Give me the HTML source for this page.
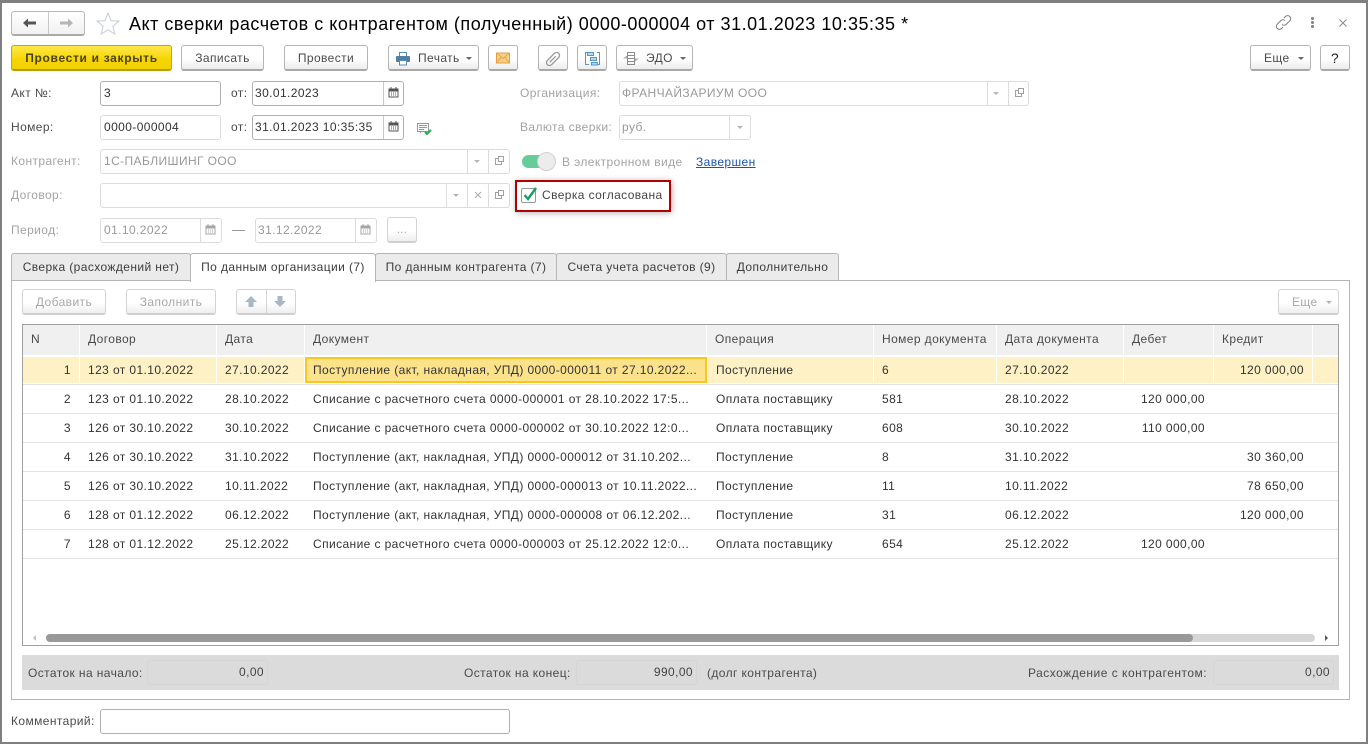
<!DOCTYPE html>
<html lang="ru"><head><meta charset="utf-8"><title>Акт сверки</title>
<style>
html,body{margin:0;padding:0;width:1368px;height:744px;overflow:hidden;background:#fff}
body{font:12px/16px "Liberation Sans",Arial,sans-serif;color:#4a4a4a;position:relative;letter-spacing:.4px}
div,span,svg{position:absolute;box-sizing:border-box}
.t{white-space:nowrap;height:16px;line-height:16px}
.g{color:#a3a3a3}
.d{color:#333}
.r{text-align:right}
.f{border:1px solid #b0b0b0;border-radius:3px;background:#fff;height:25px}
.fd{border:1px solid #dcdcdc;border-radius:3px;background:#fff;height:25px}
.vl{width:1px;top:0;bottom:0;background:#c8c8c8}
.vld{width:1px;top:0;bottom:0;background:#dcdcdc}
.b{height:26px;border:1px solid #b5b5b5;border-bottom:2px solid #a8a8a8;border-radius:3px;background:linear-gradient(#fff,#fff 55%,#ececec);text-align:center;line-height:24px;color:#4a4a4a;white-space:nowrap}
.bd{height:26px;border:1px solid #d4d4d4;border-bottom:2px solid #cfcfcf;border-radius:3px;background:linear-gradient(#fff,#fff 55%,#efefef);text-align:center;line-height:24px;color:#a8a8a8;white-space:nowrap}
.tab{top:253px;height:28px;border:1px solid #b5b5b5;border-radius:3px 3px 0 0;background:#ebebeb;color:#3c3c3c;line-height:26px;text-align:center;white-space:nowrap}
.h{top:325px;height:30px;background:#f0f0f0;line-height:28px;padding-left:8px;color:#4a4a4a;white-space:nowrap}
.c{height:16px;line-height:16px;color:#333;white-space:nowrap}
.sep{left:23px;width:1315px;height:1px;background:#e3e3e3}
.v{top:357px;width:1px;height:26px;background:#fff}
</style></head><body>
<!-- window frame -->
<div style="left:0;top:0;width:1368px;height:744px;border:solid #7f7f7f;border-width:3px 2px 2px 2px"></div>

<!-- nav -->
<div style="left:11px;top:11px;width:74px;height:25px;border:1px solid #b8b8b8;border-bottom:2px solid #aaa;border-radius:3px;background:linear-gradient(#fff,#f1f1f1)"></div>
<div style="left:48px;top:12px;width:1px;height:22px;background:#c8c8c8"></div>
<svg style="left:22px;top:16px" width="16" height="14" viewBox="0 0 16 14"><path d="M1 7l5-4.500V5.500h8v3H6v3z" fill="#555"/></svg>
<svg style="left:58px;top:16px" width="16" height="14" viewBox="0 0 16 14"><path d="M15 7l-5-4.500V5.500H2v3h8v3z" fill="#b5b5b5"/></svg>
<svg style="left:95px;top:11px" width="26" height="24" viewBox="0 0 26 24"><path d="M13 2l3 7.600 8 .6-6.200 5 2 7.800L13 18.800 6.200 23l2-7.800L2 10.200l8-.6z" fill="#fff" stroke="#c9d1d8" stroke-width="1.100"/></svg>
<div class="t" style="left:129px;top:12px;height:24px;line-height:24px;font-size:18px;color:#000;letter-spacing:.52px">Акт сверки расчетов с контрагентом (полученный) 0000-000004 от 31.01.2023 10:35:35 *</div>
<svg style="left:1275px;top:14px" width="17" height="17" viewBox="0 0 17 17" fill="none" stroke="#7a7a7a" stroke-width="1"><path d="M9 4l1.500-1.500a3 3 0 0 1 4.300 4.300L11 10.500a3 3 0 0 1-4 0"/><path d="M8 13l-1.500 1.500a3 3 0 0 1-4.300-4.300L6 6.500a3 3 0 0 1 4 0"/></svg>
<div style="left:1311px;top:17px;width:3px;height:3px;background:#8a8a8a;border-radius:1px"></div>
<div style="left:1311px;top:21px;width:3px;height:3px;background:#8a8a8a;border-radius:1px"></div>
<div style="left:1311px;top:25px;width:3px;height:3px;background:#8a8a8a;border-radius:1px"></div>
<svg style="left:1338px;top:18px" width="10" height="10" viewBox="0 0 10 10"><path d="M1.500 1.500l7 7M8.500 1.500l-7 7" stroke="#8a8a8a" fill="none"/></svg>

<!-- toolbar -->
<div style="left:11px;top:45px;width:161px;height:26px;border:1px solid #c5a800;border-bottom:2px solid #b89c00;border-radius:3px;background:linear-gradient(#ffe84a,#f6d500 60%,#f2d000);text-align:center;line-height:24px;font-weight:bold;color:#4a4320;white-space:nowrap;letter-spacing:.68px">Провести и закрыть</div>
<div class="b" style="left:181px;top:45px;width:83px">Записать</div>
<div class="b" style="left:284px;top:45px;width:84px">Провести</div>
<div class="b" style="left:388px;top:45px;width:91px;text-align:left;padding-left:29px">Печать</div>
<svg style="left:395px;top:51px" width="16" height="15" viewBox="0 0 16 15"><rect x="4.500" y="1.500" width="7" height="4" fill="#fff" stroke="#5d88ad"/><rect x="1" y="5" width="14" height="6" rx="1" fill="#4f7ea6"/><rect x="4.500" y="9.500" width="7" height="4.500" fill="#fff" stroke="#5d88ad"/></svg>
<svg style="left:465px;top:56px" width="8" height="5" viewBox="0 0 8 5"><path d="M1 1h6L4 4z" fill="#666"/></svg>
<div class="b" style="left:488px;top:45px;width:30px"></div>
<svg style="left:495px;top:52px" width="16" height="12" viewBox="0 0 16 12"><rect x="1.500" y="1" width="13" height="10" fill="#f8cf88" stroke="#dfa040"/><path d="M1.500 1L8 6.500 14.500 1M1.500 11L6 5.500M14.500 11L10 5.500" fill="none" stroke="#e3a84c"/></svg>
<div class="b" style="left:538px;top:45px;width:30px"></div>
<svg style="left:545px;top:51px" width="16" height="16" viewBox="0 0 16 16" fill="none" stroke="#989898" stroke-width="1.300"><g transform="rotate(-45 8 8)"><rect x="0" y="5" width="16" height="6" rx="3"/><path d="M3.500 8H12"/></g></svg>
<div class="b" style="left:577px;top:45px;width:30px"></div>
<svg style="left:585px;top:51px" width="15" height="15" viewBox="0 0 15 15" fill="none" stroke="#5a96c4"><path d="M2 1.500H.5v12H4M12 1.500h2.500v12H13"/><rect x="2.500" y="1.500" width="6" height="3" fill="#b8d6ec"/><rect x="5.500" y="6.500" width="6" height="3" fill="#b8d6ec"/><rect x="6.500" y="11.500" width="6" height="2.500" fill="#b8d6ec"/></svg>
<div class="b" style="left:616px;top:45px;width:77px;text-align:left;padding-left:29px">ЭДО</div>
<svg style="left:623px;top:51px" width="16" height="15" viewBox="0 0 16 15" fill="none"><path d="M4.500 1.500h7v12h-7zM4.500 4.500h7M4.500 7.500h7M4.500 10.500h7" stroke="#8a8a8a"/><path d="M4 4.500L0 7.500h4zM12 10.500l4-3h-4z" fill="#aeaeae"/></svg>
<svg style="left:679px;top:56px" width="8" height="5" viewBox="0 0 8 5"><path d="M1 1h6L4 4z" fill="#666"/></svg>
<div class="b" style="left:1250px;top:45px;width:61px;text-align:left;padding-left:13px">Еще</div>
<svg style="left:1297px;top:56px" width="8" height="5" viewBox="0 0 8 5"><path d="M1 1h6L4 4z" fill="#666"/></svg>
<div class="b" style="left:1320px;top:45px;width:30px;font-size:14px;color:#222;font-weight:normal">?</div>

<!-- row 1 -->
<div class="t" style="left:11px;top:85px">Акт №:</div>
<div class="f" style="left:100px;top:81px;width:121px"></div>
<div class="t d" style="left:104px;top:85px">3</div>
<div class="t" style="left:231px;top:85px">от:</div>
<div class="f" style="left:252px;top:81px;width:152px"><div class="vl" style="left:130px"></div></div>
<div class="t d" style="left:255px;top:85px">30.01.2023</div>
<svg style="left:388px;top:87px" width="11" height="11" viewBox="0 0 11 11"><rect x="1" y="2" width="9" height="8" fill="#fff" stroke="#555"/><rect x="1" y="2" width="9" height="2.500" fill="#555"/><path d="M3 0v2M8 0v2" stroke="#555"/><path d="M3 6h1M5 6h1M7 6h1M3 8h1M5 8h1M7 8h1" stroke="#555"/></svg>
<div class="t g" style="left:520px;top:85px">Организация:</div>
<div class="fd" style="left:619px;top:81px;width:410px"><div class="vld" style="left:367px"></div><div class="vld" style="left:388px"></div></div>
<div class="t g" style="left:622px;top:85px;color:#999">ФРАНЧАЙЗАРИУМ ООО</div>
<svg style="left:992px;top:91px" width="8" height="5" viewBox="0 0 8 5"><path d="M1 1h6L4 4z" fill="#b5b5b5"/></svg>
<svg style="left:1014px;top:87px" width="11" height="11" viewBox="0 0 11 11" fill="none" stroke="#a0a0a0"><rect x="4.500" y="1.500" width="5" height="5"/><path d="M4.500 3.500h-3v6h6v-3"/></svg>

<!-- row 2 -->
<div class="t" style="left:11px;top:119px">Номер:</div>
<div class="fd" style="left:100px;top:115px;width:121px"></div>
<div class="t d" style="left:104px;top:119px">0000-000004</div>
<div class="t" style="left:231px;top:119px">от:</div>
<div class="f" style="left:252px;top:115px;width:152px"><div class="vl" style="left:130px"></div></div>
<div class="t d" style="left:255px;top:119px">31.01.2023 10:35:35</div>
<svg style="left:388px;top:121px" width="11" height="11" viewBox="0 0 11 11"><rect x="1" y="2" width="9" height="8" fill="#fff" stroke="#555"/><rect x="1" y="2" width="9" height="2.500" fill="#555"/><path d="M3 0v2M8 0v2" stroke="#555"/><path d="M3 6h1M5 6h1M7 6h1M3 8h1M5 8h1M7 8h1" stroke="#555"/></svg>
<svg style="left:416px;top:122px" width="17" height="14" viewBox="0 0 17 14"><rect x="1.500" y="1.500" width="11" height="8" fill="#fff" stroke="#8a9aa6"/><path d="M3 3.500h8M3 5.500h8M3 7.500h5" stroke="#8a9aa6"/><path d="M4 9.500v2l2-2" fill="#8a9aa6"/><path d="M9 10l2 2 4-4" fill="none" stroke="#22b14c" stroke-width="2"/></svg>
<div class="t g" style="left:520px;top:119px">Валюта сверки:</div>
<div class="fd" style="left:619px;top:115px;width:132px"><div class="vld" style="left:109px"></div></div>
<div class="t g" style="left:622px;top:119px;color:#999">руб.</div>
<svg style="left:736px;top:125px" width="8" height="5" viewBox="0 0 8 5"><path d="M1 1h6L4 4z" fill="#b5b5b5"/></svg>

<!-- row 3 -->
<div class="t g" style="left:11px;top:153px">Контрагент:</div>
<div class="fd" style="left:100px;top:149px;width:410px"><div class="vld" style="left:366px"></div><div class="vld" style="left:387px"></div></div>
<div class="t g" style="left:104px;top:153px;color:#999">1С-ПАБЛИШИНГ ООО</div>
<svg style="left:473px;top:159px" width="8" height="5" viewBox="0 0 8 5"><path d="M1 1h6L4 4z" fill="#b5b5b5"/></svg>
<svg style="left:494px;top:155px" width="11" height="11" viewBox="0 0 11 11" fill="none" stroke="#a0a0a0"><rect x="4.500" y="1.500" width="5" height="5"/><path d="M4.500 3.500h-3v6h6v-3"/></svg>
<div style="left:522px;top:155px;width:33px;height:13px;border-radius:7px;background:#66cc99"></div>
<div style="left:537px;top:152px;width:19px;height:19px;border-radius:10px;background:#ececec;border:1px solid #d0d0d0"></div>
<div class="t g" style="left:562px;top:154px">В электронном виде</div>
<div class="t" style="left:696px;top:154px;color:#1c55ad;text-decoration:underline">Завершен</div>

<!-- row 4 -->
<div class="t g" style="left:11px;top:187px">Договор:</div>
<div class="fd" style="left:100px;top:183px;width:410px"><div class="vld" style="left:345px"></div><div class="vld" style="left:366px"></div><div class="vld" style="left:387px"></div></div>
<svg style="left:452px;top:193px" width="8" height="5" viewBox="0 0 8 5"><path d="M1 1h6L4 4z" fill="#b5b5b5"/></svg>
<svg style="left:474px;top:191px" width="8" height="8" viewBox="0 0 8 8"><path d="M1 1l6 6M7 1L1 7" stroke="#aaa" fill="none"/></svg>
<svg style="left:494px;top:189px" width="11" height="11" viewBox="0 0 11 11" fill="none" stroke="#a0a0a0"><rect x="4.500" y="1.500" width="5" height="5"/><path d="M4.500 3.500h-3v6h6v-3"/></svg>
<div style="left:515px;top:180px;width:156px;height:32px;border:2px solid #b00000;background:#fff;box-shadow:1px 1px 6px rgba(0,0,0,.3)"></div>
<div style="left:521px;top:188px;width:15px;height:15px;border:1px solid #9a9a9a;border-radius:2px;background:#fff"></div>
<svg style="left:522px;top:186px" width="16" height="16" viewBox="0 0 16 16"><path d="M2.500 9l3.500 4L14 2" fill="none" stroke="#13a05a" stroke-width="2.400"/></svg>
<div class="t d" style="left:542px;top:187px;color:#444">Сверка согласована</div>

<!-- row 5 -->
<div class="t g" style="left:11px;top:222px">Период:</div>
<div class="fd" style="left:100px;top:218px;width:122px"><div class="vld" style="left:99px"></div></div>
<div class="t g" style="left:104px;top:222px;color:#999">01.10.2022</div>
<svg style="left:205px;top:224px" width="11" height="11" viewBox="0 0 11 11"><rect x="1" y="2" width="9" height="8" fill="#fff" stroke="#a5a5a5"/><rect x="1" y="2" width="9" height="2.500" fill="#a5a5a5"/><path d="M3 0v2M8 0v2" stroke="#a5a5a5"/><path d="M3 6h1M5 6h1M7 6h1M3 8h1M5 8h1M7 8h1" stroke="#a5a5a5"/></svg>
<div style="left:232px;top:230px;width:13px;height:1px;background:#999"></div>
<div class="fd" style="left:255px;top:218px;width:122px"><div class="vld" style="left:99px"></div></div>
<div class="t g" style="left:258px;top:222px;color:#999">31.12.2022</div>
<svg style="left:360px;top:224px" width="11" height="11" viewBox="0 0 11 11"><rect x="1" y="2" width="9" height="8" fill="#fff" stroke="#a5a5a5"/><rect x="1" y="2" width="9" height="2.500" fill="#a5a5a5"/><path d="M3 0v2M8 0v2" stroke="#a5a5a5"/><path d="M3 6h1M5 6h1M7 6h1M3 8h1M5 8h1M7 8h1" stroke="#a5a5a5"/></svg>
<div class="bd" style="left:387px;top:217px;width:30px;font-size:11px">...</div>

<!-- tabs -->
<div style="left:11px;top:280px;width:1339px;height:420px;border:1px solid #b5b5b5"></div>
<div class="tab" style="left:11px;width:180px">Сверка (расхождений нет)</div>
<div class="tab" style="left:190px;width:186px;background:#fff;border-bottom:0;z-index:2;height:29px">По данным организации (7)</div>
<div class="tab" style="left:375px;width:182px">По данным контрагента (7)</div>
<div class="tab" style="left:556px;width:171px">Счета учета расчетов (9)</div>
<div class="tab" style="left:726px;width:113px">Дополнительно</div>

<div class="bd" style="left:22px;top:289px;width:84px">Добавить</div>
<div class="bd" style="left:126px;top:289px;width:90px">Заполнить</div>
<div class="bd" style="left:236px;top:289px;width:60px"></div>
<div style="left:266px;top:290px;width:1px;height:23px;background:#d4d4d4"></div>
<svg style="left:244px;top:295px" width="14" height="13" viewBox="0 0 14 13"><path d="M7 1l6 6H9.500v5h-5V7H1z" fill="#a9b8c2"/></svg>
<svg style="left:273px;top:295px" width="14" height="13" viewBox="0 0 14 13"><path d="M7 12l6-6H9.500V1h-5v5H1z" fill="#a9b8c2"/></svg>
<div class="bd" style="left:1278px;top:289px;width:61px;text-align:left;padding-left:13px">Еще</div>
<svg style="left:1325px;top:300px" width="8" height="5" viewBox="0 0 8 5"><path d="M1 1h6L4 4z" fill="#b5b5b5"/></svg>

<!-- table -->
<div style="left:22px;top:324px;width:1317px;height:322px;border:1px solid #a0a0a0;background:#fff"></div>
<div class="h" style="left:23px;width:56px">N</div>
<div class="h" style="left:80px;width:136px">Договор</div>
<div class="h" style="left:217px;width:87px">Дата</div>
<div class="h" style="left:305px;width:401px">Документ</div>
<div class="h" style="left:707px;width:166px">Операция</div>
<div class="h" style="left:874px;width:122px">Номер документа</div>
<div class="h" style="left:997px;width:126px">Дата документа</div>
<div class="h" style="left:1124px;width:89px">Дебет</div>
<div class="h" style="left:1214px;width:98px">Кредит</div>
<div class="h" style="left:1313px;width:25px"></div>

<!-- selected row -->
<div style="left:23px;top:357px;width:1315px;height:26px;background:#fdf1c5"></div>
<div class="v" style="left:79px"></div>
<div class="v" style="left:216px"></div>
<div class="v" style="left:304px"></div>
<div class="v" style="left:706px"></div>
<div class="v" style="left:873px"></div>
<div class="v" style="left:996px"></div>
<div class="v" style="left:1123px"></div>
<div class="v" style="left:1213px"></div>
<div class="v" style="left:1312px"></div>
<div style="left:305px;top:357px;width:402px;height:26px;background:#fde28c;border:2px solid #f8c81e"></div>

<div class="sep" style="top:384px"></div><div class="sep" style="top:413px"></div><div class="sep" style="top:442px"></div><div class="sep" style="top:471px"></div><div class="sep" style="top:500px"></div><div class="sep" style="top:529px"></div><div class="sep" style="top:558px"></div>

<!-- r1 -->
<div class="c r" style="left:23px;width:48px;top:362px">1</div><div class="c" style="left:88px;top:362px">123 от 01.10.2022</div><div class="c" style="left:225px;top:362px">27.10.2022</div><div class="c" style="left:313px;top:362px">Поступление (акт, накладная, УПД) 0000-000011 от 27.10.2022...</div><div class="c" style="left:716px;top:362px">Поступление</div><div class="c" style="left:882px;top:362px">6</div><div class="c" style="left:1005px;top:362px">27.10.2022</div><div class="c r" style="left:1214px;width:90px;top:362px">120 000,00</div>
<!-- r2 -->
<div class="c r" style="left:23px;width:48px;top:391px">2</div><div class="c" style="left:88px;top:391px">123 от 01.10.2022</div><div class="c" style="left:225px;top:391px">28.10.2022</div><div class="c" style="left:313px;top:391px">Списание с расчетного счета 0000-000001 от 28.10.2022 17:5...</div><div class="c" style="left:716px;top:391px">Оплата поставщику</div><div class="c" style="left:882px;top:391px">581</div><div class="c" style="left:1005px;top:391px">28.10.2022</div><div class="c r" style="left:1124px;width:81px;top:391px">120 000,00</div>
<!-- r3 -->
<div class="c r" style="left:23px;width:48px;top:420px">3</div><div class="c" style="left:88px;top:420px">126 от 30.10.2022</div><div class="c" style="left:225px;top:420px">30.10.2022</div><div class="c" style="left:313px;top:420px">Списание с расчетного счета 0000-000002 от 30.10.2022 12:0...</div><div class="c" style="left:716px;top:420px">Оплата поставщику</div><div class="c" style="left:882px;top:420px">608</div><div class="c" style="left:1005px;top:420px">30.10.2022</div><div class="c r" style="left:1124px;width:81px;top:420px">110 000,00</div>
<!-- r4 -->
<div class="c r" style="left:23px;width:48px;top:449px">4</div><div class="c" style="left:88px;top:449px">126 от 30.10.2022</div><div class="c" style="left:225px;top:449px">31.10.2022</div><div class="c" style="left:313px;top:449px">Поступление (акт, накладная, УПД) 0000-000012 от 31.10.202...</div><div class="c" style="left:716px;top:449px">Поступление</div><div class="c" style="left:882px;top:449px">8</div><div class="c" style="left:1005px;top:449px">31.10.2022</div><div class="c r" style="left:1214px;width:90px;top:449px">30 360,00</div>
<!-- r5 -->
<div class="c r" style="left:23px;width:48px;top:478px">5</div><div class="c" style="left:88px;top:478px">126 от 30.10.2022</div><div class="c" style="left:225px;top:478px">10.11.2022</div><div class="c" style="left:313px;top:478px">Поступление (акт, накладная, УПД) 0000-000013 от 10.11.2022...</div><div class="c" style="left:716px;top:478px">Поступление</div><div class="c" style="left:882px;top:478px">11</div><div class="c" style="left:1005px;top:478px">10.11.2022</div><div class="c r" style="left:1214px;width:90px;top:478px">78 650,00</div>
<!-- r6 -->
<div class="c r" style="left:23px;width:48px;top:507px">6</div><div class="c" style="left:88px;top:507px">128 от 01.12.2022</div><div class="c" style="left:225px;top:507px">06.12.2022</div><div class="c" style="left:313px;top:507px">Поступление (акт, накладная, УПД) 0000-000008 от 06.12.202...</div><div class="c" style="left:716px;top:507px">Поступление</div><div class="c" style="left:882px;top:507px">31</div><div class="c" style="left:1005px;top:507px">06.12.2022</div><div class="c r" style="left:1214px;width:90px;top:507px">120 000,00</div>
<!-- r7 -->
<div class="c r" style="left:23px;width:48px;top:536px">7</div><div class="c" style="left:88px;top:536px">128 от 01.12.2022</div><div class="c" style="left:225px;top:536px">25.12.2022</div><div class="c" style="left:313px;top:536px">Списание с расчетного счета 0000-000003 от 25.12.2022 12:0...</div><div class="c" style="left:716px;top:536px">Оплата поставщику</div><div class="c" style="left:882px;top:536px">654</div><div class="c" style="left:1005px;top:536px">25.12.2022</div><div class="c r" style="left:1124px;width:81px;top:536px">120 000,00</div>

<!-- scrollbar -->
<svg style="left:32px;top:634px" width="5" height="8" viewBox="0 0 5 8"><path d="M4 1v6L1 4z" fill="#c0c0c0"/></svg>
<div style="left:46px;top:634px;width:1269px;height:8px;border-radius:4px;background:#d6d6d6"></div>
<div style="left:46px;top:634px;width:1147px;height:8px;border-radius:4px;background:#999"></div>
<svg style="left:1324px;top:634px" width="5" height="8" viewBox="0 0 5 8"><path d="M1 1v6l3-3z" fill="#555"/></svg>

<!-- totals -->
<div style="left:22px;top:655px;width:1317px;height:35px;background:#dbdbdb"></div>
<div class="t" style="left:28px;top:665px">Остаток на начало:</div>
<div style="left:147px;top:660px;width:121px;height:25px;border:1px solid #d5d5d5;border-radius:3px"></div>
<div class="t r" style="left:147px;top:664px;width:117px;color:#444">0,00</div>
<div class="t" style="left:464px;top:665px">Остаток на конец:</div>
<div style="left:576px;top:660px;width:121px;height:25px;border:1px solid #d5d5d5;border-radius:3px"></div>
<div class="t r" style="left:576px;top:664px;width:117px;color:#444">990,00</div>
<div class="t" style="left:707px;top:665px">(долг контрагента)</div>
<div class="t" style="left:1028px;top:665px;letter-spacing:.5px">Расхождение с контрагентом:</div>
<div style="left:1213px;top:660px;width:121px;height:25px;border:1px solid #d5d5d5;border-radius:3px"></div>
<div class="t r" style="left:1213px;top:664px;width:117px;color:#444">0,00</div>

<!-- comment -->
<div class="t" style="left:11px;top:713px">Комментарий:</div>
<div class="f" style="left:100px;top:709px;width:410px"></div>
</body></html>
